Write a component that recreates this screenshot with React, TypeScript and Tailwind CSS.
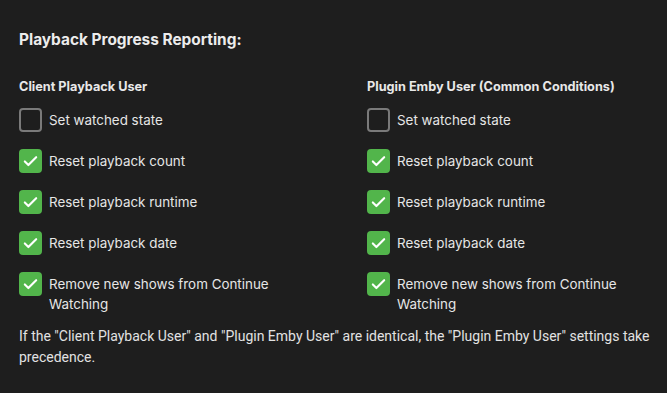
import { Check } from "lucide-react";

type TOption = {
  label: string;
  checked: boolean;
};

const options: TOption[] = [
  { label: "Set watched state", checked: false },
  { label: "Reset playback count", checked: true },
  { label: "Reset playback runtime", checked: true },
  { label: "Reset playback date", checked: true },
  { label: "Remove new shows from Continue Watching", checked: true },
];

const OptionRow: React.FC<TOption> = ({ label, checked }) => (
  <div className="flex items-start gap-[7px]">
    {checked ? (
      <div className="w-[23px] h-[24px] shrink-0 rounded-[4px] bg-[#52b54b] flex items-center justify-center">
        <Check size={17} strokeWidth={3} className="text-white" />
      </div>
    ) : (
      <div className="w-[23px] h-[24px] shrink-0 rounded-[4px] border-2 border-[#7a7a7a]" />
    )}
    <span className="max-w-[250px] pt-[2px] text-[13.4px] leading-[20px] text-[#e6e6e6]">
      {label}
    </span>
  </div>
);

const Column: React.FC<{ title: string }> = ({ title }) => (
  <div>
    <p className="text-[12.7px] font-bold leading-[18px] text-[#e8e8e8] mb-[12px]">{title}</p>
    <div className="flex flex-col gap-[17px]">
      {options.map((opt, i) => (
        <OptionRow key={i} {...opt} />
      ))}
    </div>
  </div>
);

export default function App() {
  return (
    <div
      className="w-[667px] h-[393px] bg-[#1e1e1e] pl-[19px] pt-[29px]"
      style={{ fontFamily: "Inter, 'Noto Sans', sans-serif" }}
    >
      <h2 className="text-[15.4px] font-bold leading-[22px] text-[#ececec] mb-[27px]">
        Playback Progress Reporting:
      </h2>
      <div className="grid grid-cols-[348px_1fr]">
        <Column title="Client Playback User" />
        <Column title="Plugin Emby User (Common Conditions)" />
      </div>
      <p
        className="mt-[12px] pr-[10px] text-[14px] leading-[21px] text-[#e2e2e2]"
        style={{ fontFamily: "Roboto, sans-serif" }}
      >
        If the "Client Playback User" and "Plugin Emby User" are identical, the "Plugin Emby User" settings take
        precedence.
      </p>
    </div>
  );
}
